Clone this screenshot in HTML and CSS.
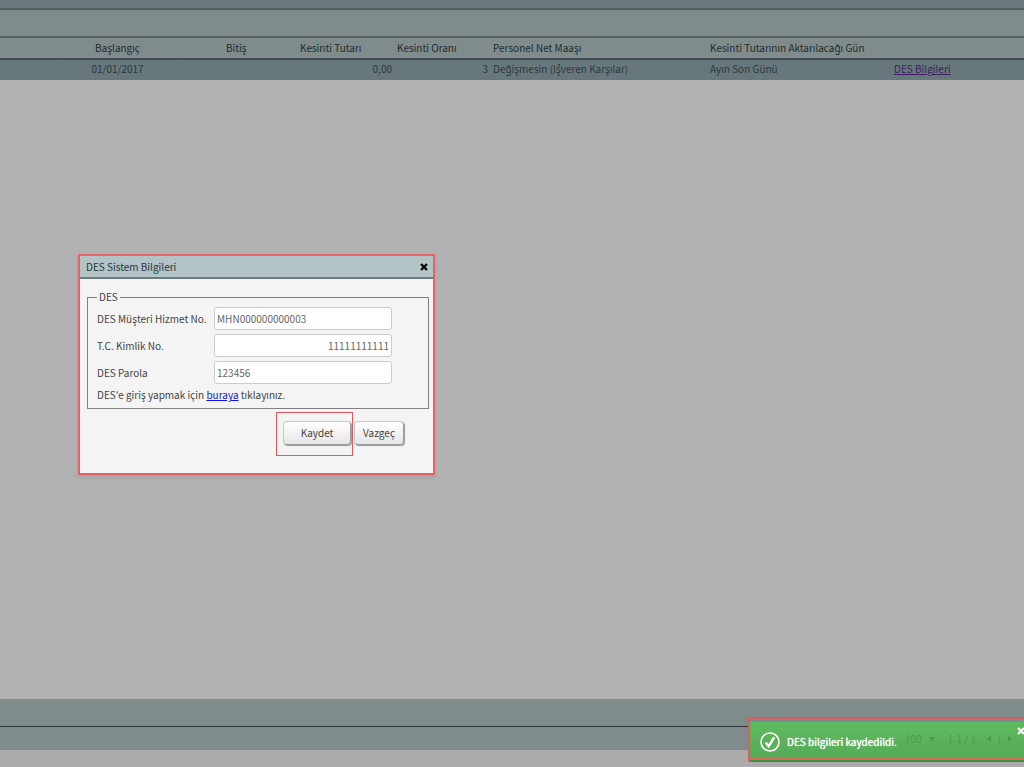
FILE: index.html
```html
<!DOCTYPE html>
<html lang="tr">
<head>
<meta charset="utf-8">
<title>DES Sistem Bilgileri</title>
<link rel="stylesheet" href="styles.css">
</head>
<body>
<main class="page">
  <div class="topbar"></div>
  <div class="toolbar"></div>
  <table class="grid">
    <colgroup>
      <col class="c-blank"><col class="c-start"><col class="c-end"><col class="c-amount"><col class="c-rate"><col class="c-salary"><col class="c-day"><col>
    </colgroup>
    <thead>
      <tr>
        <th></th><th class="center divided">Başlangıç</th><th class="center divided">Bitiş</th><th>Kesinti Tutarı</th><th>Kesinti Oranı</th><th>Personel Net Maaşı</th><th>Kesinti Tutarının Aktarılacağı Gün</th><th class="divided"></th>
      </tr>
    </thead>
    <tbody>
      <tr>
        <td></td><td class="center">01/01/2017</td><td></td><td class="num">0,00</td><td class="num">3</td><td>Değişmesin (İşveren Karşılar)</td><td>Ayın Son Günü</td><td><a class="visited" href="#des">DES Bilgileri</a></td>
      </tr>
    </tbody>
  </table>
  <div class="space"></div>
  <footer class="footer">
    <div class="footer-top"></div>
    <div class="footer-bottom"></div>
  </footer>
</main>

<section class="dialog" id="des" role="dialog" aria-labelledby="dialog-title">
  <header class="dialog-head">
    <h1 class="dialog-title" id="dialog-title">DES Sistem Bilgileri</h1>
    <button class="close" type="button" aria-label="Kapat">
      <svg width="8" height="8" viewBox="0 0 8 8"><path d="M1 1L7 7M7 1L1 7" stroke="currentColor" stroke-width="2.2"/></svg>
    </button>
  </header>
  <form class="dialog-body">
    <fieldset class="fields">
      <legend>DES</legend>
      <div class="field"><label for="mhn">DES Müşteri Hizmet No.</label><input id="mhn" type="text" value="MHN000000000003"></div>
      <div class="field"><label for="tc">T.C. Kimlik No.</label><input class="right" id="tc" type="text" value="11111111111"></div>
      <div class="field"><label for="parola">DES Parola</label><input id="parola" type="text" value="123456"></div>
      <p class="hint">DES'e giriş yapmak için <a href="#giris">buraya</a> tıklayınız.</p>
    </fieldset>
    <div class="actions">
      <div class="highlight"><button class="btn btn-wide" type="button">Kaydet</button></div>
      <button class="btn" type="button">Vazgeç</button>
    </div>
  </form>
</section>

<aside class="toast-frame">
  <div class="toast" role="status">
    <svg class="check" width="20" height="20" viewBox="0 0 20 20" fill="none" stroke="currentColor"><circle cx="10" cy="10" r="9" stroke-width="1.6"/><path d="M5.6 10.4L8.7 14.2L14.2 5.4" stroke-width="2.4"/></svg>
    <span class="toast-text">DES bilgileri kaydedildi.</span>
    <span class="pager"><span>100</span><svg width="6" height="4" viewBox="0 0 6 4"><path d="M0 0H6L3 4Z" fill="currentColor"/></svg><span class="pages">1-1 / 1</span><svg width="4" height="6" viewBox="0 0 4 6"><path d="M4 0V6L0 3Z" fill="currentColor"/></svg><span>|</span><svg width="4" height="6" viewBox="0 0 4 6"><path d="M0 0V6L4 3Z" fill="currentColor"/></svg></span>
    <button class="close toast-close" type="button" aria-label="Bildirimi kapat">
      <svg width="8" height="8" viewBox="0 0 8 8"><path d="M1 1L7 7M7 1L1 7" stroke="currentColor" stroke-width="2"/></svg>
    </button>
  </div>
</aside>
</body>
</html>
```
FILE: styles.css
```css
* { box-sizing: border-box; }
body {
  margin: 0;
  background: #ababab;
  color: #444;
  font: 10px/16px "Noto Sans CJK SC", "Noto Sans", sans-serif;
  overflow: hidden;
}
button, input { font: inherit; color: inherit; }

.page { display: flex; flex-direction: column; height: 100vh; padding-bottom: 17px; }
.topbar { height: 10px; background: #68787c; border-bottom: 2px solid #525d5f; }
.toolbar { height: 28px; background: #808b8b; border-bottom: 2px solid #596263; }
.grid { width: 100%; table-layout: fixed; border-collapse: collapse; color: #1f2b30; }
.c-blank { width: 59px; }
.c-start { width: 121px; }
.c-end { width: 116px; }
.c-amount { width: 97px; }
.c-rate { width: 96px; }
.c-salary { width: 217px; }
.c-day { width: 184px; }
.grid th, .grid td { height: 21px; padding: 0 1px 0 4px; text-align: left; font-weight: 400; white-space: nowrap; }
.grid th { background: #808b8b; border-bottom: 2px solid #3d4a50; }
.grid td { padding-bottom: 2px; background: #67787c; color: #2b383d; }
.grid .center { text-align: center; padding-left: 0; padding-right: 4px; }
.grid .num { text-align: right; }
.grid .divided { border-left: 1px solid #869090; }
.visited { color: #3b2060; }
.space { flex: 1; background: #b2b2b2; }
.footer { background: #808b8b; }
.footer-top { height: 28px; border-bottom: 1px solid #273236; }
.footer-bottom { height: 23px; }

.dialog {
  position: absolute;
  left: 78px;
  top: 254px;
  width: 357px;
  border: 2px solid #e8606a;
  background: #f4f4f4;
  box-shadow: 0 2px 4px #8886;
}
.dialog-head {
  display: flex;
  align-items: center;
  justify-content: space-between;
  height: 23px;
  padding: 0 5px 0 6px;
  background: #b2c4c6;
  border-bottom: 2px solid #6e7b7d;
  color: #29353a;
}
.dialog-title { margin: 0; font-size: inherit; font-weight: 400; }
.close { display: flex; padding: 0; border: 0; background: none; color: #000; }
.dialog-body { padding: 11px 4px 17px 7px; }
.fields { margin: 0; padding: 3px 8px 6px 9px; border: 1px solid #808080; box-shadow: none; min-width: 0; }
.fields legend { padding: 0 2px; line-height: 14px; }
.field { display: flex; align-items: center; margin-bottom: 4px; }
.field label { width: 117px; }
.field input {
  width: 178px;
  height: 23px;
  padding: 0 2px;
  border: 1px solid #ccc;
  border-radius: 3px;
  background: #fff;
  color: #666;
}
.field .right { text-align: right; }
.hint { margin: 0; line-height: 14px; }
.hint a { color: #1414e0; }
.actions { display: flex; align-items: flex-start; justify-content: flex-end; gap: 1px; padding: 3px 25px 0 0; }
.actions > .btn { margin-top: 9px; }
.highlight { padding: 8px 1px 10px 6px; border: 1px solid #e8525c; }
.btn {
  display: block;
  height: 24px;
  padding: 0 8px;
  border: 1px solid #c4c8ca;
  border-right-color: #999;
  border-bottom-color: #999;
  border-radius: 4px;
  background: linear-gradient(#fff, #e6e6e6);
  box-shadow: 1px 1px 1px #999;
}
.btn-wide { width: 68px; }

.toast-frame {
  position: fixed;
  right: 0;
  bottom: 5px;
  width: 276px;
  height: 45px;
  padding: 3px 0 0;
  border: 2px solid #d75e68;
  border-right: 0;
  border-bottom: 0;
}
.toast {
  position: relative;
  display: flex;
  align-items: center;
  height: 40px;
  padding: 2px 0 0 10px;
  background: linear-gradient(#5fbb5f, #57a957);
  border-bottom: 2px solid #3f9040;
  box-shadow: inset 0 -2px 0 #d66c55;
  color: #fff;
}
.toast-text { margin-left: 7px; text-shadow: 0 0 1px #fff; }
.pager { display: flex; align-items: center; gap: 7px; margin: -6px 0 0 8px; color: #4b9b4c; }
.pages { margin: 0 4px 0 6px; }
.toast-close { position: absolute; right: -1px; top: 5px; color: #fff; }
```
